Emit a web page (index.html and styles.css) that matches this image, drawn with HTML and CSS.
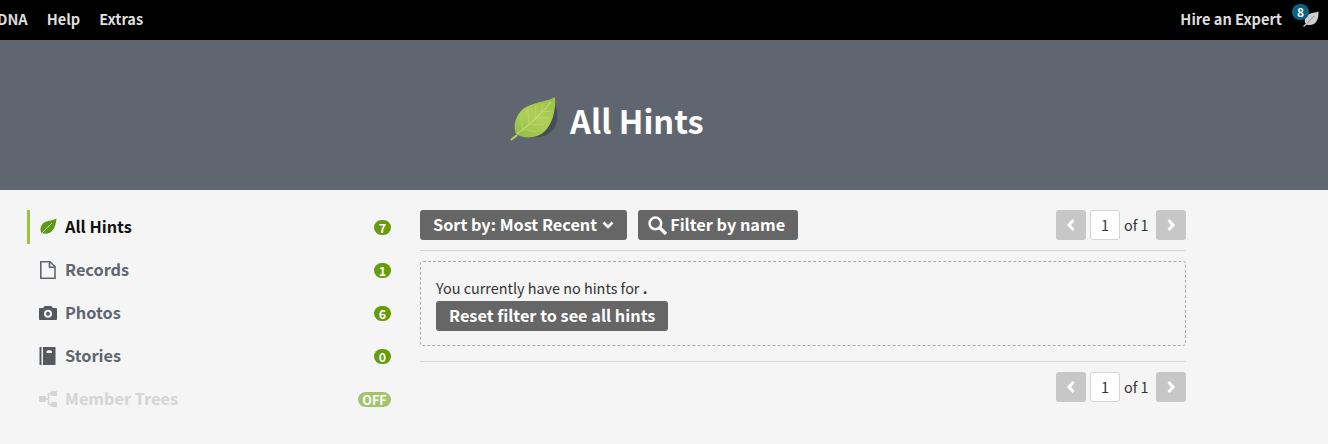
FILE: index.html
```html
<!DOCTYPE html>
<html lang="en">
<head>
  <meta charset="UTF-8">
  <title>All Hints</title>
  <link rel="stylesheet" href="styles.css">
</head>
<body>

<svg class="defs" width="0" height="0" aria-hidden="true">
  <defs>
    <linearGradient id="leafFill" x1="0.8" y1="0" x2="0.2" y2="1">
      <stop offset="0" stop-color="#9cc444"/>
      <stop offset="0.5" stop-color="#aed05a"/>
      <stop offset="1" stop-color="#98bf45"/>
    </linearGradient>
  </defs>
</svg>

<nav class="topbar">
  <div class="topbar-links">
    <a class="topbar-link">DNA</a>
    <a class="topbar-link">Help</a>
    <a class="topbar-link">Extras</a>
  </div>
  <div class="topbar-right">
    <a class="topbar-link">Hire an Expert</a>
    <span class="hint-bell">
      <svg class="hint-bell-leaf" viewBox="0 0 16 16">
        <path d="M15.500 0.500C11 2 5.500 2 3 5.500 1 8.500 1.500 12 3.500 13.500 7.500 15 12 13.500 14 9.500 15.500 6.500 15.500 3.500 15.500 0.500Z" fill="#cdcdcd"/>
        <path d="M4 12.500 11 5" stroke="#777" stroke-width="0.700" fill="none"/>
        <path d="M0.500 15.500 4 12.500" stroke="#cdcdcd" stroke-width="1.200" fill="none"/>
      </svg>
      <span class="hint-bell-count">8</span>
    </span>
  </div>
</nav>

<header class="banner">
  <svg class="banner-leaf" viewBox="0 0 50 46">
    <path d="M45 8C49 15 48 26 43 33 38 39 30 41 22 40L36 10Z" fill="#3f454d" opacity="0.7"/>
    <path d="M45 0C37 5 22 5 13 12 5 19 3 29 6 37 13 42 27 42 35 34 43 26 46 12 45 0Z" fill="url(#leafFill)"/>
    <path d="M1 43C3 41 5 40 7 38" stroke="#b9d36c" stroke-width="2" fill="none"/>
    <path d="M7 37C17 30 28 20 41 5" stroke="#cfe38f" stroke-width="1" fill="none"/>
    <path d="M13 32 11 20M19 27 18 12M25 21 26 9M31 15 33 7M13 32 27 35M19 27 34 28M25 21 39 21M31 15 42 14" stroke="#c2da7c" stroke-width="0.600" fill="none"/>
  </svg>
  <h1 class="banner-title">All Hints</h1>
</header>

<div class="page">
  <aside class="sidebar">
    <a class="side-item side-item-active">
      <svg class="side-icon" viewBox="0 0 18 18">
        <path d="M17.500 0.500C13 3 7 2.500 4 5.500 1 8.500 1 12.500 2.500 15 6 16.500 10.500 16 13.500 12.500 16.500 9 17 4.500 17.500 0.500Z" fill="#5c9a14"/>
        <path d="M0.500 17.500 3.500 14.500 13 5" stroke="#d8e8b4" stroke-width="0.900" fill="none"/>
      </svg>
      <span class="side-label">All Hints</span>
      <span class="count">7</span>
    </a>
    <a class="side-item">
      <svg class="side-icon" viewBox="0 0 18 18">
        <path d="M1.800 0.800H11L16 5.800V17.200H1.800Z M10.500 1V6.300H16" fill="none" stroke="#5f6670" stroke-width="1.600"/>
      </svg>
      <span class="side-label">Records</span>
      <span class="count">1</span>
    </a>
    <a class="side-item">
      <svg class="side-icon" viewBox="0 0 18 18">
        <path fill-rule="evenodd" fill="#55595f" d="M5.500 2H12.500L13.800 4H17C17.600 4 18 4.400 18 5V15C18 15.600 17.600 16 17 16H1C0.400 16 0 15.600 0 15V5C0 4.400 0.400 4 1 4H4.200ZM9 5.800A4 4 0 1 0 9 13.800 4 4 0 1 0 9 5.800ZM9 7.800A2 2 0 1 1 9 11.800 2 2 0 1 1 9 7.800Z"/>
      </svg>
      <span class="side-label">Photos</span>
      <span class="count">6</span>
    </a>
    <a class="side-item">
      <svg class="side-icon" viewBox="0 0 18 18">
        <path fill-rule="evenodd" fill="#55595f" d="M0.500 0H2.500V18H0.500ZM4 0H16.500V18H4ZM7.500 5V6H13V5C13 3.800 12 3.200 10.200 3.200S7.500 3.800 7.500 5Z"/>
      </svg>
      <span class="side-label">Stories</span>
      <span class="count">0</span>
    </a>
    <a class="side-item side-item-off">
      <svg class="side-icon" viewBox="0 0 18 18">
        <path d="M6 9H9.500M9.500 3.500V14.500M9.500 3.500H12M9.500 14.500H12" stroke="#d4d4d4" stroke-width="1.600" fill="none"/>
        <rect x="0" y="6" width="7" height="6" rx="1" fill="#d4d4d4"/>
        <rect x="12" y="1" width="6" height="5" rx="1" fill="#d4d4d4"/>
        <rect x="12" y="12" width="6" height="5" rx="1" fill="#d4d4d4"/>
      </svg>
      <span class="side-label">Member Trees</span>
      <span class="count count-off">OFF</span>
    </a>
  </aside>

  <main class="content">
    <div class="toolbar">
      <div class="toolbar-actions">
        <button class="btn">Sort by: Most Recent
          <svg class="btn-chevron" viewBox="0 0 12 8"><path d="M1.500 1.500 6 6 10.500 1.500" fill="none" stroke="#fff" stroke-width="2.600"/></svg>
        </button>
        <button class="btn btn-filter">
          <svg class="btn-search" viewBox="0 0 18 18"><circle cx="7" cy="7" r="5.500" fill="none" stroke="#fff" stroke-width="2.400"/><path d="M11 11 17 17" stroke="#fff" stroke-width="3.200"/></svg>
          Filter by name
        </button>
      </div>
      <div class="pager">
        <span class="pager-arrow"><svg viewBox="0 0 10 14"><path d="M7.500 2 3 7 7.500 12" fill="none" stroke="#fff" stroke-width="3"/></svg></span>
        <span class="pager-input">1</span>
        <span class="pager-total">of 1</span>
        <span class="pager-arrow"><svg viewBox="0 0 10 14"><path d="M2.500 2 7 7 2.500 12" fill="none" stroke="#fff" stroke-width="3"/></svg></span>
      </div>
    </div>

    <div class="empty">
      <p class="empty-text">You currently have no hints for <b class="empty-dot">.</b></p>
      <button class="btn">Reset filter to see all hints</button>
    </div>

    <div class="toolbar toolbar-bottom">
      <div class="pager">
        <span class="pager-arrow"><svg viewBox="0 0 10 14"><path d="M7.500 2 3 7 7.500 12" fill="none" stroke="#fff" stroke-width="3"/></svg></span>
        <span class="pager-input">1</span>
        <span class="pager-total">of 1</span>
        <span class="pager-arrow"><svg viewBox="0 0 10 14"><path d="M2.500 2 7 7 2.500 12" fill="none" stroke="#fff" stroke-width="3"/></svg></span>
      </div>
    </div>
  </main>
</div>

</body>
</html>
```

FILE: styles.css
```css
* {
  box-sizing: border-box;
}
html, body {
  height: 100%;
}
body {
  margin: 0;
  background: #f5f5f5;
  color: #333;
  font-family: "Noto Sans CJK SC", "Noto Sans", sans-serif;
  font-size: 14.4px;
  line-height: 20px;
  overflow: hidden;
}
.defs {
  position: absolute;
}

.topbar {
  height: 40px;
  background: #000;
  display: flex;
  justify-content: space-between;
  align-items: center;
}
.topbar-links {
  display: flex;
  gap: 19px;
  margin-left: -3px;
}
.topbar-link {
  margin-bottom: 3px;
  color: #ddd;
  font-weight: 700;
  font-size: 14.6px;
}
.topbar-right {
  display: flex;
  align-items: center;
  gap: 8px;
  margin-right: 8px;
}
.hint-bell {
  position: relative;
  width: 30px;
  height: 40px;
}
.hint-bell-leaf {
  position: absolute;
  left: 13px;
  top: 11px;
  width: 16px;
  height: 16px;
}
.hint-bell-count {
  position: absolute;
  left: 2px;
  top: 4px;
  width: 17px;
  height: 16px;
  border-radius: 8px;
  background: #0b6283;
  color: #fff;
  font-size: 12px;
  line-height: 15px;
  font-weight: 700;
  text-align: center;
}

.banner {
  height: 150px;
  padding: 10px 0 0 510px;
  background: #5f6670;
  display: flex;
  align-items: center;
  gap: 10px;
}
.banner-leaf {
  width: 50px;
  height: 46px;
}
.banner-title {
  margin: 0;
  color: #fff;
  font-size: 32.6px;
  line-height: 44px;
  font-weight: 700;
}

.page {
  display: flex;
  padding: 20px 0 0 27px;
}
.sidebar {
  width: 364px;
  margin-right: 29px;
  display: flex;
  flex-direction: column;
  gap: 9px;
}
.side-item {
  height: 34px;
  display: flex;
  align-items: center;
  padding-left: 9px;
  border-left: 3px solid transparent;
  color: #5f6670;
  font-size: 16.3px;
  font-weight: 700;
}
.side-item-active {
  border-left-color: #a0c040;
  color: #111;
}
.side-item-off {
  color: #d4d4d4;
}
.side-icon {
  width: 18px;
  height: 18px;
  margin-right: 8px;
  flex: none;
}
.side-label {
  flex: 1;
  margin-top: -3px;
}
.count {
  min-width: 17px;
  height: 15px;
  padding: 0 3px;
  border-radius: 8px;
  background: #659c08;
  color: #fff;
  font-size: 12.5px;
  line-height: 15px;
  font-weight: 700;
  text-align: center;
}
.count-off {
  width: 33px;
  background: #a3c46c;
}

.content {
  width: 766px;
}
.toolbar {
  display: flex;
  justify-content: space-between;
  padding-bottom: 10px;
  border-bottom: 1px solid #d4d4d4;
}
.toolbar-bottom {
  justify-content: flex-end;
  padding: 10px 0 0;
  margin-top: 15px;
  border-top: 1px solid #d4d4d4;
  border-bottom: 0;
}
.toolbar-actions {
  display: flex;
  gap: 11px;
}
.btn {
  height: 30px;
  padding: 0 13px 2px;
  border: 0;
  border-radius: 3px;
  background: #666;
  color: #fff;
  font-family: inherit;
  font-size: 16.3px;
  line-height: 28px;
  font-weight: 700;
  display: inline-flex;
  align-items: center;
  gap: 5px;
}
.btn-filter {
  padding-left: 10px;
  gap: 3px;
}
.btn-chevron {
  width: 12px;
  height: 8px;
  margin-top: 2px;
}
.btn-search {
  width: 19px;
  height: 19px;
  margin-top: 2px;
}

.pager {
  display: flex;
  align-items: center;
}
.pager-arrow {
  width: 30px;
  height: 30px;
  border-radius: 3px;
  background: #c7c7c7;
  display: flex;
  align-items: center;
  justify-content: center;
}
.pager-arrow svg {
  width: 10px;
  height: 14px;
}
.pager-input {
  width: 30px;
  height: 30px;
  margin-left: 4px;
  border: 1px solid #d4d4d4;
  border-radius: 3px;
  background: #fff;
  line-height: 28px;
  text-align: center;
}
.pager-total {
  width: 36px;
  padding-left: 4px;
}

.empty {
  margin-top: 10px;
  height: 85px;
  padding: 15px 15px 0;
  border: 1px dashed #aaa;
  border-radius: 3px;
}
.empty-text {
  margin: 0 0 3px;
  line-height: 21px;
}
.empty-dot {
  font-weight: 700;
}
```
